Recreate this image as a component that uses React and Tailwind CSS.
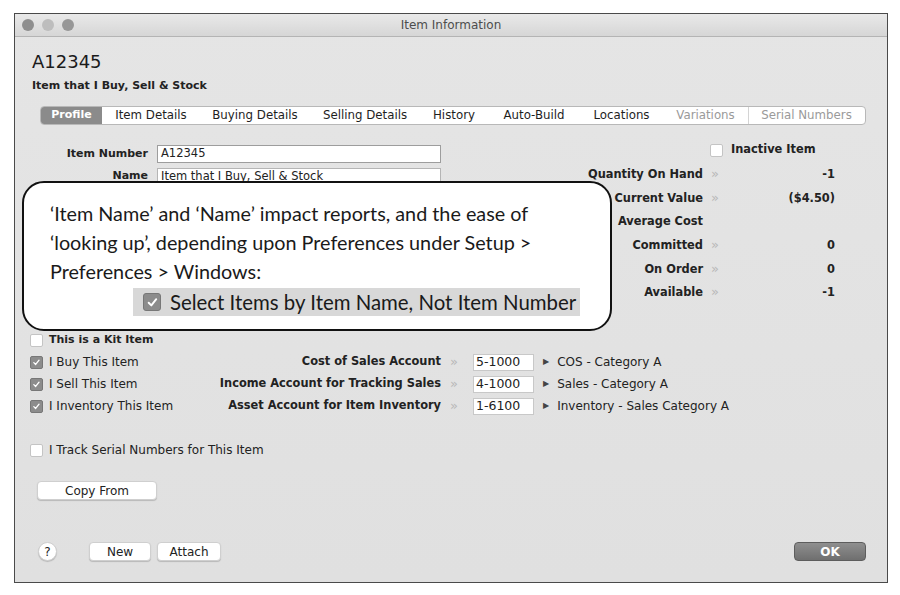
import React from 'react';

const ui = { fontFamily: '"DejaVu Sans", "Noto Sans", sans-serif' };
const note = { fontFamily: 'Lato, "Open Sans", sans-serif' };

const tabs = [
  { name: 'Profile', w: 'w-[61px]', active: true },
  { name: 'Item Details', w: 'w-[98px]' },
  { name: 'Buying Details', w: 'w-[110px]' },
  { name: 'Selling Details', w: 'w-[110px]' },
  { name: 'History', w: 'w-[68px]' },
  { name: 'Auto-Build', w: 'w-[92px]' },
  { name: 'Locations', w: 'w-[83px]' },
  { name: 'Variations', w: 'w-[85px]', off: true },
  { name: 'Serial Numbers', w: 'w-[116px]', off: true, sep: true },
];

const stats = [
  { label: 'Quantity On Hand', value: '-1', arrow: true },
  { label: 'Current Value', value: '($4.50)', arrow: true },
  { label: 'Average Cost', value: '' },
  { label: 'Committed', value: '0', arrow: true },
  { label: 'On Order', value: '0', arrow: true },
  { label: 'Available', value: '-1', arrow: true },
];

const accounts = [
  { check: 'I Buy This Item', on: true, label: 'Cost of Sales Account', code: '5-1000', name: 'COS - Category A' },
  { check: 'I Sell This Item', on: true, label: 'Income Account for Tracking Sales', code: '4-1000', name: 'Sales - Category A' },
  { check: 'I Inventory This Item', on: true, label: 'Asset Account for Item Inventory', code: '1-6100', name: 'Inventory - Sales Category A' },
];

function Check({ on, big }) {
  const size = big ? 'w-[18px] h-[18px] rounded-[3px]' : 'w-[13px] h-[13px] rounded-[2px]';
  if (!on) {
    return <span className={`${size} shrink-0 bg-white border border-[#c4c4c4]`} />;
  }
  return (
    <span className={`${size} shrink-0 bg-[#8c8c8c] border border-[#777] flex items-center justify-center`}>
      <svg viewBox="0 0 12 12" className="w-[80%] h-[80%]">
        <path d="M2.5 6.3 L5 8.8 L9.6 3" fill="none" stroke="#fff" strokeWidth="1.8" strokeLinecap="round" strokeLinejoin="round" />
      </svg>
    </span>
  );
}

function Zoom() {
  return <span className="text-[#b8b8b8] text-[13px] leading-none">»</span>;
}

function Btn({ children, w }) {
  return (
    <div className={`${w} h-[19px] bg-white rounded-[4px] border border-[#cfcfcf] shadow-[0_1px_1px_rgba(0,0,0,0.18)] flex items-center justify-center text-[12px] text-[#222]`}>
      {children}
    </div>
  );
}

export default function App() {
  return (
    <div className="w-[900px] h-[595px] bg-white pt-[13px] pl-[14px] overflow-hidden" style={ui}>
      <div className="relative w-[874px] h-[570px] border border-[#4a4a4a] bg-gradient-to-b from-[#e5e5e5] to-[#e0e0e0] flex flex-col">
        {/* title bar */}
        <div className="relative h-[23px] shrink-0 bg-gradient-to-b from-[#e9e9e9] to-[#d6d6d6] border-b border-[#b4b4b4] flex items-center pl-[7px] gap-[8px]">
          <span className="w-[12px] h-[12px] rounded-full bg-[#8e8e8e]" />
          <span className="w-[12px] h-[12px] rounded-full bg-[#bdbdbd]" />
          <span className="w-[12px] h-[12px] rounded-full bg-[#979797]" />
          <div className="absolute inset-0 flex items-center justify-center text-[12px] text-[#4d4d4d]">Item Information</div>
        </div>

        <div className="flex-1 flex flex-col pl-[17px] text-[#222]">
          <div className="pt-[14px] text-[18px] leading-[22px] text-[#1a1a1a]">A12345</div>
          <div className="mt-[6px] text-[11px] leading-[14px] font-bold">Item that I Buy, Sell &amp; Stock</div>

          {/* tabs */}
          <div className="mt-[13px] ml-[8px] w-[826px] h-[19px] bg-white border border-[#b8b8b8] rounded-[4px] flex items-stretch overflow-hidden text-[11.8px]">
            {tabs.map((t) => (
              <div
                key={t.name}
                className={`${t.w} shrink-0 flex items-center justify-center ${
                  t.active ? 'bg-[#8b8b8b] text-white font-bold text-[11px]' : t.off ? 'text-[#9a9a9a]' : 'text-[#1e1e1e]'
                } ${t.sep ? 'border-l border-[#d4d4d4]' : ''}`}
              >
                {t.name}
              </div>
            ))}
          </div>

          {/* top section */}
          <div className="flex h-[204px]">
            <div className="w-[430px] shrink-0 pt-[20px] flex flex-col gap-[5px] text-[11px]">
              <div className="flex items-center h-[18px]">
                <span className="w-[116px] text-right font-bold">Item Number</span>
                <span className="ml-[9px] w-[284px] h-[18px] bg-white border border-[#9d9d9d] flex items-center px-[3px] text-[11.5px]">A12345</span>
              </div>
              <div className="flex items-center h-[17px]">
                <span className="w-[116px] text-right font-bold">Name</span>
                <span className="ml-[9px] w-[284px] h-[17px] bg-white border border-[#b5b5b5] flex items-center px-[3px] text-[11.5px]">Item that I Buy, Sell &amp; Stock</span>
              </div>
            </div>
            <div className="flex-1 pt-[16px] text-[11.4px]">
              <div className="h-[18px] flex items-center pl-[248px] gap-[8px]">
                <Check />
                <span className="font-bold">Inactive Item</span>
              </div>
              <div className="mt-[4px]">
                {stats.map((s) => (
                  <div key={s.label} className="h-[23.6px] flex items-center">
                    <span className="w-[241px] text-right font-bold">{s.label}</span>
                    <span className="w-[22px] pl-[8px]">{s.arrow && <Zoom />}</span>
                    <span className="w-[110px] text-right font-bold">{s.value}</span>
                  </div>
                ))}
              </div>
            </div>
          </div>

          {/* lower section */}
          <div className="ml-[-2px] flex flex-col text-[12px]">
            <div className="h-[22px] flex items-center gap-[6px]">
              <Check />
              <span className="font-bold text-[11px]">This is a Kit Item</span>
            </div>
            {accounts.map((a) => (
              <div key={a.check} className="h-[22px] flex items-center">
                <div className="w-[159px] flex items-center gap-[6px]">
                  <Check on={a.on} />
                  <span>{a.check}</span>
                </div>
                <span className="w-[252px] text-right font-bold text-[11.4px]">{a.label}</span>
                <span className="w-[32px] pl-[9px]"><Zoom /></span>
                <span className="w-[61px] h-[17px] bg-white border border-[#c8c8c8] flex items-center px-[2px] text-[12.5px]">{a.code}</span>
                <span className="ml-[9px] text-[8px] text-[#444]">▶</span>
                <span className="ml-[8px]">{a.name}</span>
              </div>
            ))}
            <div className="h-[22px] mt-[22px] flex items-center gap-[6px]">
              <Check />
              <span>I Track Serial Numbers for This Item</span>
            </div>
            <div className="mt-[20px] ml-[7px]">
              <Btn w="w-[120px]">Copy From</Btn>
            </div>
          </div>

          {/* bottom bar */}
          <div className="mt-auto mb-[21px] flex items-center pr-[21px]">
            <span className="ml-[6px] w-[19px] h-[19px] rounded-full bg-white border border-[#cfcfcf] shadow-[0_1px_1px_rgba(0,0,0,0.18)] flex items-center justify-center text-[12px]">?</span>
            <div className="ml-[32px]"><Btn w="w-[62px]">New</Btn></div>
            <div className="ml-[6px]"><Btn w="w-[64px]">Attach</Btn></div>
            <div className="ml-auto w-[72px] h-[19px] rounded-[4px] bg-gradient-to-b from-[#8f8f8f] to-[#6f6f6f] border border-[#5d5d5d] flex items-center justify-center text-[12px] font-bold text-white">OK</div>
          </div>
        </div>

        {/* annotation callout */}
        <div className="absolute left-[7px] top-[167px] w-[590px] h-[150px] bg-white border-2 border-[#111] rounded-[22px] pl-[26px] pt-[16px] text-[#1a1a1a]" style={note}>
          <p className="text-[19.8px] leading-[29px]">‘Item Name’ and ‘Name’ impact reports, and the ease of</p>
          <p className="text-[19.8px] leading-[29px]">‘looking up’, depending upon Preferences under Setup &gt;</p>
          <p className="text-[19.8px] leading-[29px]">Preferences &gt; Windows:</p>
          <div className="ml-[83px] mt-[2px] w-[447px] h-[28px] bg-[#d8d8d8] flex items-center pl-[10px] gap-[9px]">
            <Check on big />
            <span className="text-[20.4px] leading-none">Select Items by Item Name, Not Item Number</span>
          </div>
        </div>
      </div>
    </div>
  );
}
